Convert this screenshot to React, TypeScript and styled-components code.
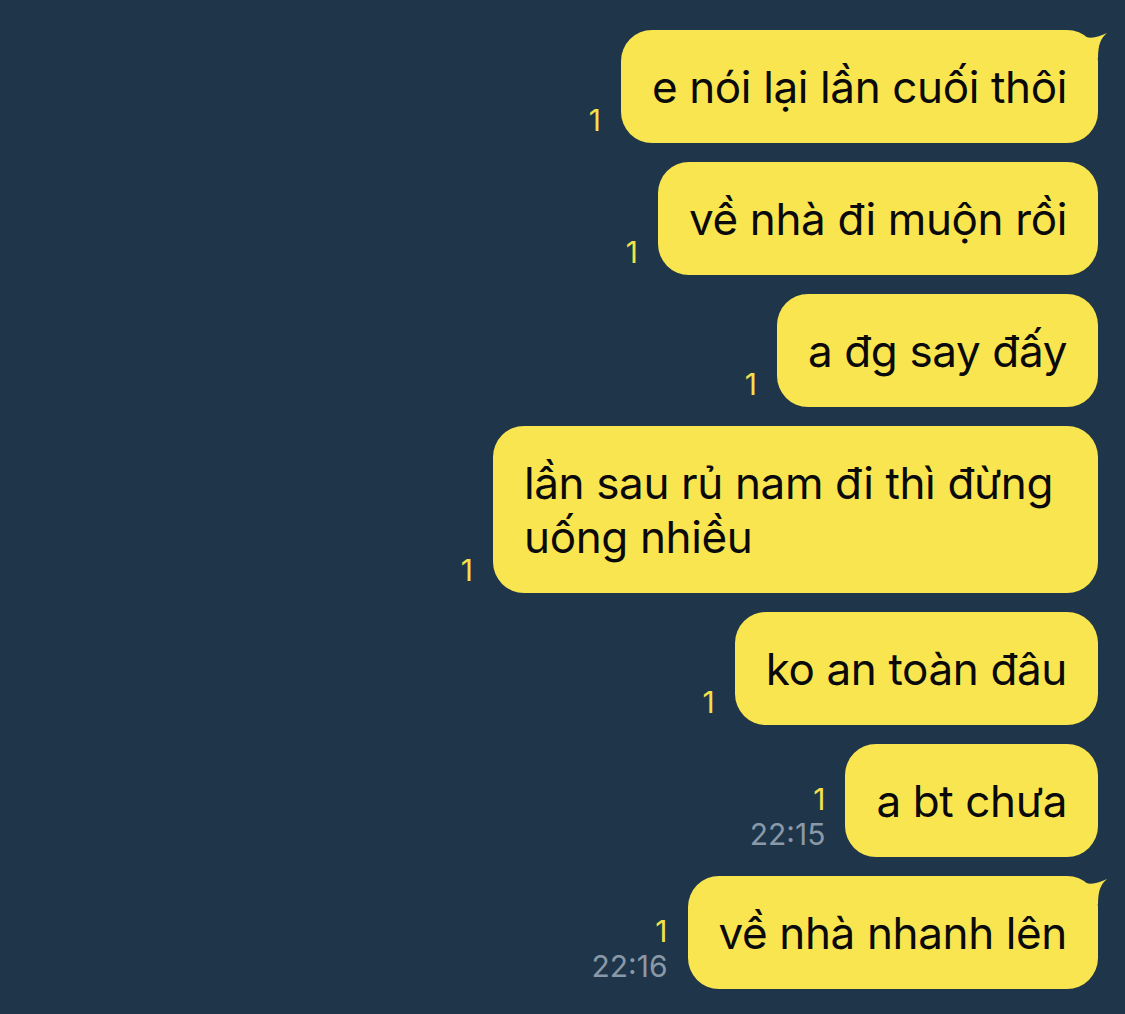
import React from "react";
import styled, { createGlobalStyle } from "styled-components";

const Global = createGlobalStyle`
  html, body { margin: 0; padding: 0; background: #1f3549; }
  body { font-family: Inter, "Noto Sans", sans-serif; }
`;

const Screen = styled.div`
  width: 1125px;
  height: 1014px;
  background: #1f3549;
  box-sizing: border-box;
  padding: 30px 27px 0 0;
  display: flex;
  flex-direction: column;
  gap: 19px;
  overflow: hidden;
`;

const Row = styled.div`
  display: flex;
  justify-content: flex-end;
  align-items: flex-end;
  gap: 20px;
`;

const Meta = styled.div`
  display: flex;
  flex-direction: column;
  align-items: flex-end;
  margin-bottom: 5px;
  font-family: Inter, sans-serif;
  font-size: 30px;
  line-height: 35px;
`;

const ReadCount = styled.span`
  color: #f4e04a;
`;

const Time = styled.span`
  color: #8a99a8;
`;

const Bubble = styled.div`
  position: relative;
  background: #f9e54f;
  color: #0a0a0a;
  border-radius: 31px;
  padding: 29.5px 31px;
  max-width: 543px;
  font-family: Inter, "Noto Sans", sans-serif;
  font-size: 44px;
  line-height: 54px;
  letter-spacing: -0.37px;
`;

const Tail = styled.svg`
  position: absolute;
  top: 0;
  right: -12px;
  width: 24px;
  height: 40px;
  overflow: visible;
`;

type Msg = { text: string; tail?: boolean; time?: string };

const messages: Msg[] = [
  { text: "e nói lại lần cuối thôi", tail: true },
  { text: "về nhà đi muộn rồi" },
  { text: "a đg say đấy" },
  { text: "lần sau rủ nam đi thì đừng uống nhiều" },
  { text: "ko an toàn đâu" },
  { text: "a bt chưa", time: "22:15" },
  { text: "về nhà nhanh lên", tail: true, time: "22:16" },
];

export default function App() {
  return (
    <>
      <Global />
      <Screen>
        {messages.map((m, i) => (
          <Row key={i}>
            <Meta>
              <ReadCount>1</ReadCount>
              {m.time && <Time>{m.time}</Time>}
            </Meta>
            <Bubble>
              {m.text}
              {m.tail && (
                <Tail viewBox="0 0 24 40">
                  <path
                    d="M0 7 C 7 9, 14 6, 21 3 C 15 8, 12 14, 12 28 L 0 28 Z"
                    fill="#f9e54f"
                  />
                </Tail>
              )}
            </Bubble>
          </Row>
        ))}
      </Screen>
    </>
  );
}
